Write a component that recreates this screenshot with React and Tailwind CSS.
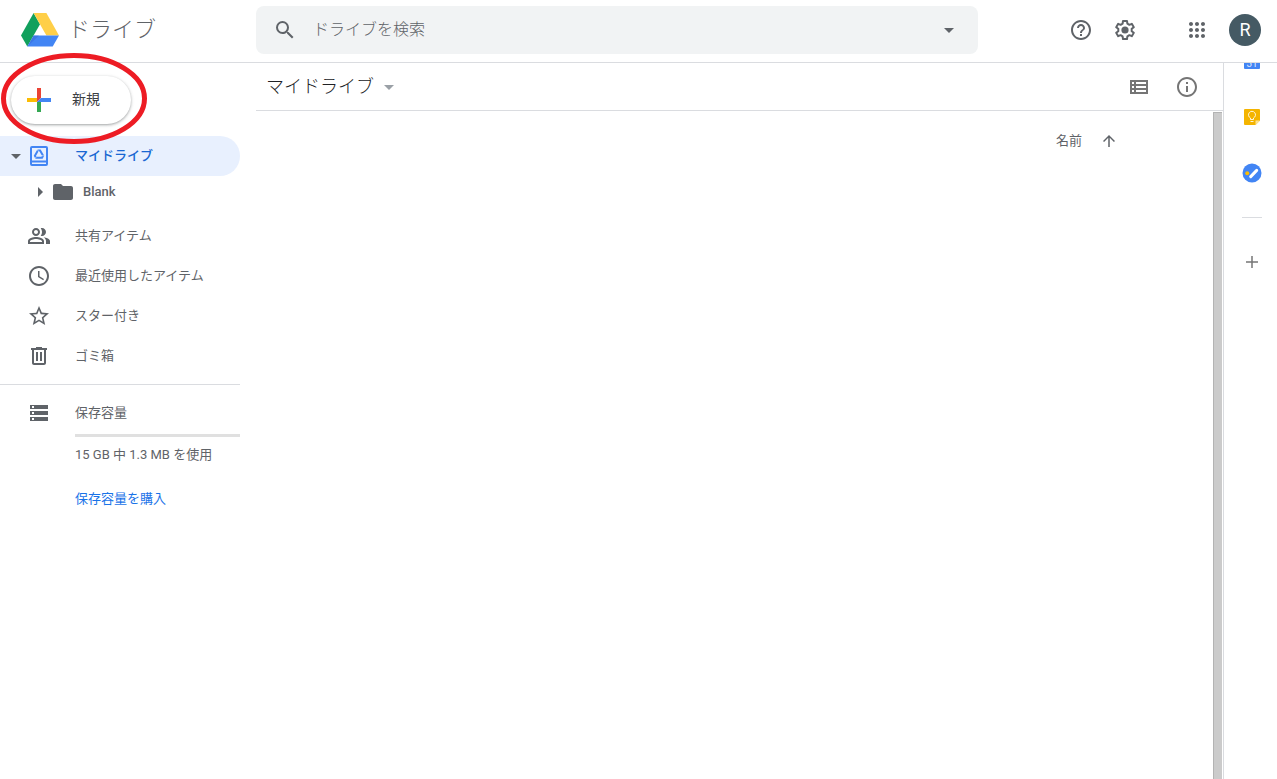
function Icon({ d, className = "size-6" }) {
  return (
    <svg viewBox="0 0 24 24" fill="currentColor" className={`${className} shrink-0`} aria-hidden="true">
      <path fillRule="evenodd" d={d} />
    </svg>
  );
}

const icons = {
  search: "M15.5 14h-.79l-.28-.27A6.47 6.47 0 0 0 16 9.5 6.5 6.5 0 1 0 9.5 16c1.61 0 3.09-.59 4.23-1.57l.27.28v.79l5 4.99L20.49 19l-4.99-5zm-6 0C7.01 14 5 11.99 5 9.5S7.01 5 9.5 5 14 7.01 14 9.5 11.99 14 9.5 14z",
  down: "M7 10l5 5 5-5z",
  right: "M10 17l5-5-5-5v10z",
  help: "M11 18h2v-2h-2v2zm1-16C6.48 2 2 6.48 2 12s4.48 10 10 10 10-4.48 10-10S17.52 2 12 2zm0 18c-4.41 0-8-3.59-8-8s3.59-8 8-8 8 3.59 8 8-3.59 8-8 8zm0-14c-2.21 0-4 1.79-4 4h2c0-1.1.9-2 2-2s2 .9 2 2c0 2-3 1.75-3 5h2c0-2.25 3-2.5 3-5 0-2.21-1.79-4-4-4z",
  apps: "M6 8c1.1 0 2-.9 2-2s-.9-2-2-2-2 .9-2 2 .9 2 2 2zm6 12c1.1 0 2-.9 2-2s-.9-2-2-2-2 .9-2 2 .9 2 2 2zm-6 0c1.1 0 2-.9 2-2s-.9-2-2-2-2 .9-2 2 .9 2 2 2zm0-6c1.1 0 2-.9 2-2s-.9-2-2-2-2 .9-2 2 .9 2 2 2zm6 0c1.1 0 2-.9 2-2s-.9-2-2-2-2 .9-2 2 .9 2 2 2zm4-8c0 1.1.9 2 2 2s2-.9 2-2-.9-2-2-2-2 .9-2 2zm-4 2c1.1 0 2-.9 2-2s-.9-2-2-2-2 .9-2 2 .9 2 2 2zm6 6c1.1 0 2-.9 2-2s-.9-2-2-2-2 .9-2 2 .9 2 2 2zm0 6c1.1 0 2-.9 2-2s-.9-2-2-2-2 .9-2 2 .9 2 2 2z",
  folder: "M10 4H4c-1.1 0-1.99.9-1.99 2L2 18c0 1.1.9 2 2 2h16c1.1 0 2-.9 2-2V8c0-1.1-.9-2-2-2h-8l-2-2z",
  people: "M16.67 13.13C18.04 14.06 19 15.32 19 17v3h4v-3c0-2.18-3.57-3.47-6.33-3.87zM15 12c2.21 0 4-1.79 4-4s-1.79-4-4-4c-.47 0-.91.1-1.33.24C14.5 5.27 15 6.58 15 8s-.5 2.73-1.33 3.76c.42.14.86.24 1.33.24zM9 12c2.21 0 4-1.79 4-4s-1.79-4-4-4-4 1.79-4 4 1.79 4 4 4zm0-6c1.1 0 2 .9 2 2s-.9 2-2 2-2-.9-2-2 .9-2 2-2zM9 13c-2.67 0-8 1.34-8 4v3h16v-3c0-2.66-5.33-4-8-4zm6 5H3v-.99C3.2 16.29 6.3 15 9 15s5.8 1.29 6 2v1z",
  clock: "M11.99 2C6.47 2 2 6.48 2 12s4.47 10 9.99 10C17.52 22 22 17.52 22 12S17.52 2 11.99 2zM12 20c-4.42 0-8-3.58-8-8s3.58-8 8-8 8 3.58 8 8-3.58 8-8 8zm.5-13H11v6l5.25 3.15.75-1.23-4.5-2.67z",
  star: "M22 9.24l-7.19-.62L12 2 9.19 8.63 2 9.24l5.46 4.73L5.82 21 12 17.27 18.18 21l-1.63-7.03L22 9.24zM12 15.4l-3.76 2.27 1-4.28-3.32-2.88 4.38-.38L12 6.1l1.71 4.04 4.38.38-3.32 2.88 1 4.28L12 15.4z",
  trash: "M15 4V3H9v1H4v2h1v13c0 1.1.9 2 2 2h10c1.1 0 2-.9 2-2V6h1V4h-5zm2 15H7V6h10v13zM9 8h2v9H9V8zm4 0h2v9h-2V8z",
  storage: "M3 20h18v-4H3v4zm2-3h2v2H5v-2zM3 4v4h18V4H3zm4 3H5V5h2v2zm-4 7h18v-4H3v4zm2-3h2v2H5v-2z",
  list: "M3 5v14h18V5H3zm2 2h2v2H5V7zm0 4h2v2H5v-2zm0 6v-2h2v2H5zm14 0H9v-2h10v2zm0-4H9v-2h10v2zm0-4H9V7h10v2z",
  info: "M11 17h2v-6h-2v6zm1-15C6.48 2 2 6.48 2 12s4.48 10 10 10 10-4.48 10-10S17.52 2 12 2zm0 18c-4.41 0-8-3.59-8-8s3.59-8 8-8 8 3.59 8 8-3.59 8-8 8zM11 9h2V7h-2v2z",
  up: "M4 12l1.41 1.41L11 7.83V20h2V7.83l5.58 5.59L20 12l-8-8-8 8z",
  plus: "M20 13h-7v7h-2v-7H4v-2h7V4h2v7h7v2z",
};

const links = [
  { label: "共有アイテム", icon: icons.people },
  { label: "最近使用したアイテム", icon: icons.clock },
  { label: "スター付き", icon: icons.star },
  { label: "ゴミ箱", icon: icons.trash },
];

function DriveLogo() {
  return (
    <svg viewBox="0 0 38 34" className="h-[34px] w-[38px]" aria-hidden="true">
      <path fill="#11a05d" d="M12.6 0 0 22.4 6.3 33.6 19 11.2z" />
      <path fill="#ffcf48" d="M12.6 0h12.8L38 22.4H25.4z" />
      <path fill="#4285f4" d="M6.3 33.6h25.4L38 22.4H12.6z" />
      <path fill="#3367d6" fillOpacity=".5" d="M12.6 22.4 6.3 33.6 18 22.4z" />
    </svg>
  );
}

function GearIcon() {
  return (
    <svg viewBox="0 0 24 24" className="size-6" fill="none" aria-hidden="true">
      <path
        stroke="currentColor"
        strokeWidth="2"
        strokeLinejoin="round"
        d="M10 3h4l.4 2.6 2 1.2 2.4-1 2 3.4-2.1 1.6v2.4l2.1 1.6-2 3.4-2.4-1-2 1.2L14 21h-4l-.4-2.6-2-1.2-2.4 1-2-3.4 2.1-1.6v-2.4L3.2 9.200l2-3.4 2.4 1 2-1.2z"
      />
      <circle cx="12" cy="12" r="3.6" fill="currentColor" />
    </svg>
  );
}

function MyDriveIcon() {
  return (
    <svg viewBox="0 0 24 24" className="size-6 shrink-0 text-[#4285f4]" fill="none" stroke="currentColor" aria-hidden="true">
      <rect x="4" y="3" width="16" height="18" rx="1" strokeWidth="2" />
      <path strokeWidth="2" d="M4 17.5h16" />
      <path strokeWidth="2" d="M10.9 6.5h2.2l3 5.2-1.1 2H9l-1.1-2z" />
      <path stroke="#e8f0fe" strokeWidth=".6" d="M12.2 8.5 10 5M9.8 12.3 7.5 15M14 11.7h3.5" />
    </svg>
  );
}

function NewIcon() {
  return (
    <svg viewBox="0 0 24 24" className="size-6" aria-hidden="true">
      <path fill="#ea4335" d="M10 0h4v10l-4 4z" />
      <path fill="#fbbc04" d="M0 10h10v4H0z" />
      <path fill="#34a853" d="M10 14h4v10h-4z" />
      <path fill="#4285f4" d="M14 10h10v4H10z" />
    </svg>
  );
}

function CalendarIcon() {
  return (
    <svg viewBox="0 0 16 16" className="size-4" aria-hidden="true">
      <rect width="16" height="16" rx="1" fill="#4285f4" />
      <text x="8" y="14" textAnchor="middle" fontSize="10" fill="#fff" fillOpacity=".85">31</text>
    </svg>
  );
}

function KeepIcon() {
  return (
    <svg viewBox="0 0 16 16" className="size-4" aria-hidden="true">
      <path fill="#f4b400" d="M1 0h14a1 1 0 0 1 1 1v10.5L11.5 16H1a1 1 0 0 1-1-1V1a1 1 0 0 1 1-1z" />
      <path fill="#fde293" d="M11.5 16v-4.5H16z" />
      <path fill="none" stroke="#fff" strokeOpacity=".85" d="M6.5 10.5V9a3.5 3.5 0 1 1 3 0v1.5zM6.5 12.5h3" />
    </svg>
  );
}

function TasksIcon() {
  return (
    <svg viewBox="0 0 20 20" className="size-5" aria-hidden="true">
      <circle cx="10" cy="10" r="9.5" fill="#4285f4" />
      <circle cx="5.2" cy="10.3" r="2" fill="#fbbc04" />
      <path stroke="#fff" strokeWidth="3" strokeLinecap="round" d="M8.7 13.6l6-6.2" />
    </svg>
  );
}

function Header() {
  return (
    <header className="flex h-[63px] items-center border-b border-[#dadce0] pr-4">
      <a href="#" className="mb-0.5 flex w-64 shrink-0 items-center gap-[9px] pl-[21px] text-[22px] leading-8 font-light text-[#5f6368]">
        <DriveLogo />
        ドライブ
      </a>
      <form className="mb-0.5 flex h-12 max-w-[722px] flex-1 items-center rounded-lg bg-[#f1f3f4] px-[17px]">
        <button type="button" aria-label="検索" className="text-[#5f6368]">
          <Icon d={icons.search} />
        </button>
        <input
          type="text"
          aria-label="ドライブを検索"
          placeholder="ドライブを検索"
          className="ml-4 min-w-0 flex-1 bg-transparent text-base font-light outline-none placeholder:text-[#5f6368]"
        />
        <button type="button" aria-label="検索オプション" className="text-[#5f6368]">
          <Icon d={icons.down} />
        </button>
      </form>
      <div className="mb-0.5 ml-auto flex items-center text-[#5f6368]">
        <button aria-label="サポート"><Icon d={icons.help} /></button>
        <button aria-label="設定" className="ml-5"><GearIcon /></button>
        <button aria-label="アプリ" className="ml-12"><Icon d={icons.apps} /></button>
        <button className="ml-5 size-8 rounded-full bg-[#455a64] text-lg leading-8 text-white">R</button>
      </div>
    </header>
  );
}

function Sidebar() {
  return (
    <aside className="w-60 shrink-0 pt-[13px] text-[13px] leading-5 text-[#5f6368]">
      <div className="relative ml-[11px] w-fit">
        <button className="flex h-12 w-[120px] items-center gap-[21px] rounded-full bg-white pl-4 text-sm text-[#3c4043] shadow-[0_1px_2px_0_rgba(60,64,67,0.302),0_1px_3px_1px_rgba(60,64,67,0.149)]">
          <NewIcon />
          <span className="pb-0.5">新規</span>
        </button>
        {/* highlight around the "new" button */}
        <svg viewBox="0 0 148 94" fill="none" className="pointer-events-none absolute -top-6 -left-[11px] h-[94px] w-[148px] max-w-none" aria-hidden="true">
          <ellipse cx="74" cy="46.5" rx="70.5" ry="43" stroke="#ed1c24" strokeWidth="5" />
        </svg>
      </div>

      <nav className="mt-3">
        <a href="#" className="flex h-10 items-center rounded-r-full bg-[#e8f0fe] pl-1 font-medium text-[#1967d2]">
          <Icon d={icons.down} className="size-6 text-[#5f6368]" />
          <span className="-ml-px"><MyDriveIcon /></span>
          <span className="ml-6">マイドライブ</span>
        </a>
        <a href="#" className="flex h-8 items-center pl-7 font-medium">
          <Icon d={icons.right} />
          <Icon d={icons.folder} className="-ml-px size-6" />
          <span className="ml-2">Blank</span>
        </a>
        <ul className="mt-2">
          {links.map((link) => (
            <li key={link.label}>
              <a href="#" className="flex h-10 items-center gap-6 pl-[27px]">
                <Icon d={link.icon} />
                {link.label}
              </a>
            </li>
          ))}
        </ul>
      </nav>

      <div className="mt-2 flex gap-6 border-t border-[#dadce0] pt-4 pl-[27px]">
        <Icon d={icons.storage} />
        <div className="flex-1">
          <a href="#" className="block pt-0.5">保存容量</a>
          <div className="mt-[11px] h-[3px] bg-[#e0e0e0]" />
          <p className="mt-2">15 GB 中 1.3 MB を使用</p>
          <a href="#" className="mt-6 block text-[#1a73e8]">保存容量を購入</a>
        </div>
      </div>
    </aside>
  );
}

function Main() {
  return (
    <main className="ml-4 flex min-w-0 flex-1 flex-col">
      <div className="flex h-12 items-center border-b border-[#dadce0] pr-6 pl-2.5">
        <button className="flex items-center gap-[3px] text-lg leading-6 font-light text-[#202124]">
          マイドライブ
          <Icon d={icons.down} className="size-6 text-[#9aa0a6]" />
        </button>
        <div className="ml-auto flex gap-6 text-[#757575]">
          <button aria-label="リスト表示"><Icon d={icons.list} /></button>
          <button aria-label="詳細を表示"><Icon d={icons.info} /></button>
        </div>
      </div>
      <div className="flex flex-1">
        <div className="flex-1 pt-[18px] pr-[95px]">
          <table className="ml-auto text-[13px] leading-6 text-[#5f6368]">
            <thead>
              <tr>
                <th className="p-0 font-normal">
                  <button className="flex items-center gap-[18px]">
                    名前
                    <Icon d={icons.up} className="size-[18px]" />
                  </button>
                </th>
              </tr>
            </thead>
          </table>
        </div>
        <div className="mt-px mr-px w-[9px] border-t border-l border-[#b3b3b3] bg-[#cbcbcb]" />
      </div>
    </main>
  );
}

function SidePanel() {
  return (
    <aside className="w-[54px] shrink-0 overflow-hidden border-l border-[#dadce0]">
      <div className="-mt-[30px] flex w-14 flex-col items-center">
        <button aria-label="カレンダー" className="flex h-14 items-center"><CalendarIcon /></button>
        <button aria-label="Keep" className="flex h-14 items-center"><KeepIcon /></button>
        <button aria-label="ToDo リスト" className="flex h-14 items-center"><TasksIcon /></button>
        <hr className="my-4 w-5 border-[#dadce0]" />
        <button aria-label="アドオンを取得" className="flex h-14 items-center text-[#757575]">
          <Icon d={icons.plus} className="size-[18px]" />
        </button>
      </div>
    </aside>
  );
}

export default function App() {
  return (
    <div className="flex min-h-screen flex-col bg-white font-[Roboto,'Noto_Sans_CJK_JP',sans-serif]">
      <Header />
      <div className="flex flex-1">
        <Sidebar />
        <Main />
        <SidePanel />
      </div>
    </div>
  );
}
